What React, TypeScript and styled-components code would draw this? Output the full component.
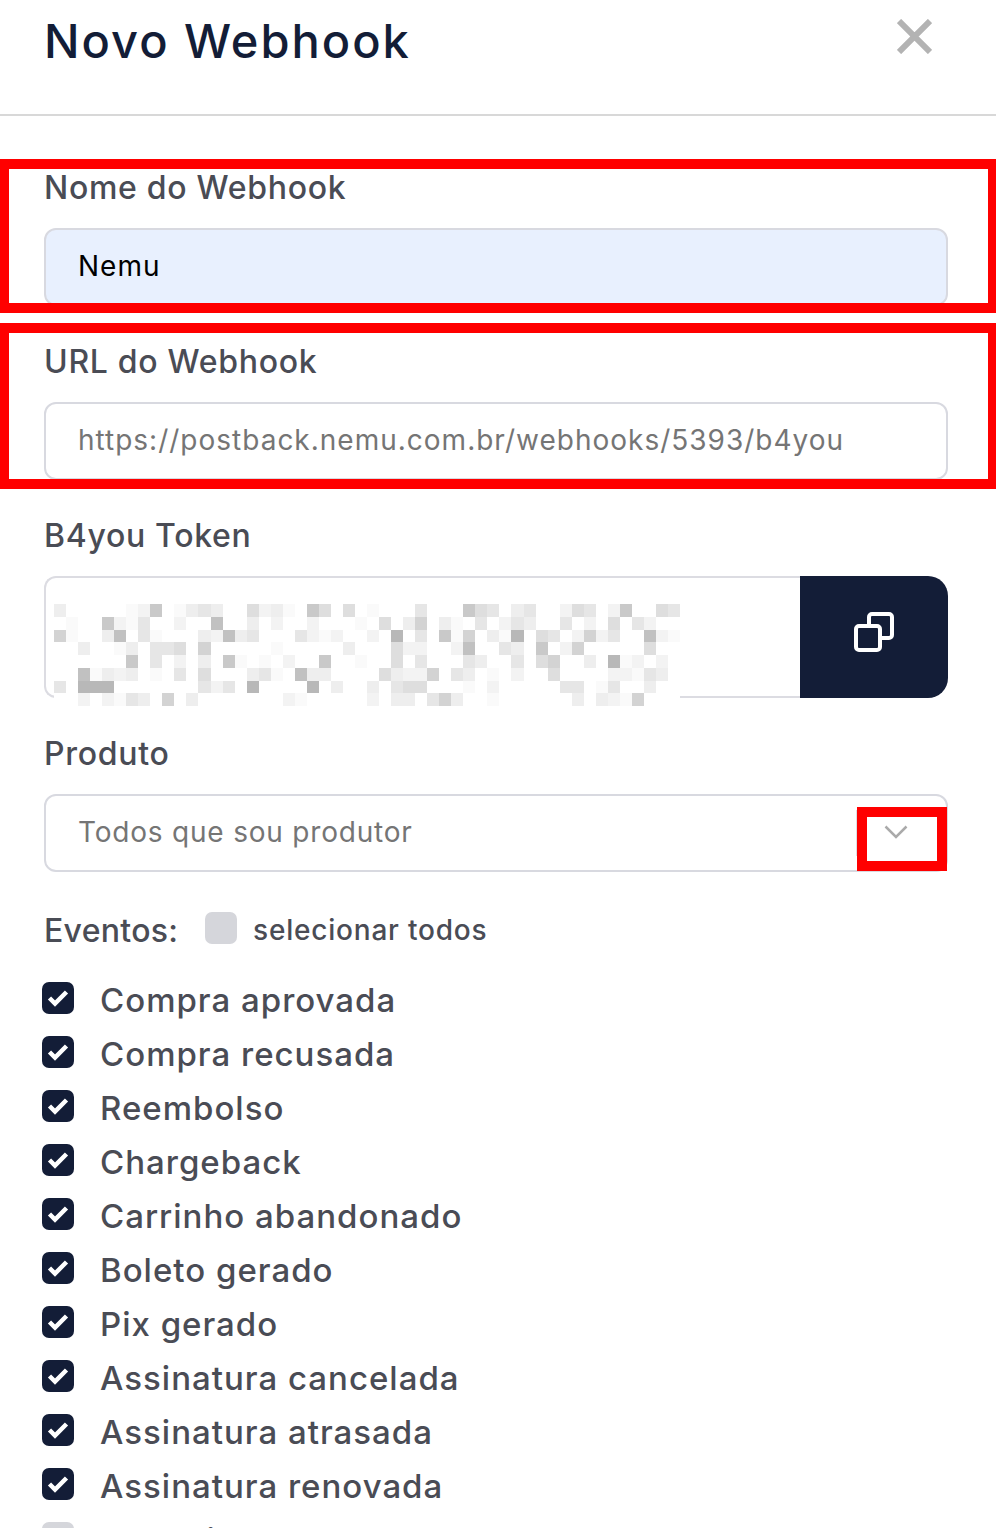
import styled, { createGlobalStyle } from "styled-components";

const GlobalStyle = createGlobalStyle`
	html, body {
		margin: 0;
		padding: 0;
		background: #fff;
	}
	body {
		font-family: "Inter", "Liberation Sans", sans-serif;
	}
	* {
		box-sizing: border-box;
	}
`;

const Page = styled.div`
	position: relative;
	width: 996px;
	height: 1528px;
	overflow: hidden;
	background: #fff;
`;
const Header = styled.header`
	display: flex;
	justify-content: space-between;
	height: 116px;
	padding: 17px 64px 0 44px;
	border-bottom: 2px solid #d8d8d8;
`;
const Title = styled.h1`
	margin: 0;
	font-size: 47px;
	line-height: 48px;
	font-weight: 500;
	letter-spacing: 2px;
	color: #131d37;
`;
const CloseButton = styled.button`
	width: 35px;
	height: 35px;
	margin-top: 2px;
	padding: 0;
	border: 0;
	background: none;
	color: #b3b3b3;
`;
const Form = styled.form`
	display: flex;
	flex-direction: column;
	gap: 32px;
	padding: 48px 48px 0 44px;
`;
const Field = styled.div`
	display: flex;
	flex-direction: column;
	gap: 16px;
`;
const Label = styled.label`
	font-size: 32px;
	line-height: 48px;
	font-weight: 500;
	letter-spacing: 0.7px;
	color: #4a4c55;
`;
const Input = styled.input<{ $filled?: boolean }>`
	width: 100%;
	height: 78px;
	padding: 0 32px 2px;
	border: 2px solid #d8d9e0;
	border-radius: 12px;
	outline: none;
	font: inherit;
	font-size: 28px;
	letter-spacing: 1px;
	color: ${(p) => (p.$filled ? "#000" : "#757575")};
	background: ${(p) => (p.$filled ? "#e8f0fe" : "#fff")};
`;
const TokenRow = styled.div`
	position: relative;
	display: flex;
	height: 122px;
`;
const TokenBox = styled.div`
	flex: 1;
	border: 2px solid #dcdce2;
	border-right: 0;
	border-radius: 12px 0 0 12px;
`;
const CopyButton = styled.button`
	display: flex;
	align-items: center;
	justify-content: center;
	width: 148px;
	padding: 0 0 10px;
	border: 0;
	border-radius: 0 20px 20px 0;
	background: #131d37;
`;
const Mosaic = styled.div`
	position: absolute;
	top: 28px;
	left: 10px;
	width: 626px;
	display: grid;
	grid-template-columns: repeat(52, 1fr);
	grid-auto-rows: 12.75px;
`;
const SelectBox = styled.div`
	position: relative;
	display: flex;
	align-items: center;
	height: 78px;
	padding: 0 32px 2px;
	border: 2px solid #d8d9e0;
	border-radius: 12px;
	font-size: 28px;
	letter-spacing: 0.8px;
	color: #757575;
`;
const ArrowDivider = styled.span`
	position: absolute;
	top: 14px;
	left: 810px;
	width: 1px;
	height: 46px;
	background: #dddde2;
`;
const Chevron = styled.svg`
	position: absolute;
	top: 29px;
	right: 38px;
`;
const EventsHead = styled.div`
	display: flex;
	align-items: center;
	height: 52px;
	color: #4a4c55;
	font-weight: 500;
`;
const EventsTitle = styled.span`
	width: 161px;
	font-size: 32px;
	letter-spacing: 0.3px;
`;
const AllBox = styled.span`
	width: 32px;
	height: 32px;
	margin-right: 16px;
	margin-bottom: 4px;
	border-radius: 7px;
	background: #d5d6db;
`;
const AllText = styled.span`
	font-size: 28px;
	letter-spacing: 0.8px;
`;
const EventList = styled.ul`
	display: flex;
	flex-direction: column;
	margin: 15px 0 0 -2px;
	padding: 0;
	list-style: none;
`;
const EventRow = styled.li`
	display: flex;
	align-items: center;
	gap: 26px;
	height: 54px;
	font-size: 33px;
	font-weight: 500;
	letter-spacing: 1px;
	color: #4a4c55;
`;
const EventName = styled.span`
	padding-top: 3px;
`;
const CheckBox = styled.span<{ $checked: boolean }>`
	display: flex;
	align-items: center;
	justify-content: center;
	flex: none;
	width: 32px;
	height: 32px;
	border-radius: 7px;
	background: ${(p) => (p.$checked ? "#131d37" : "#d5d6db")};
`;
const AnnotationBox = styled.div<{ $top: number; $height: number }>`
	position: absolute;
	top: ${(p) => p.$top}px;
	left: 0;
	right: 0;
	height: ${(p) => p.$height}px;
	border: 10px solid #ff0000;
	border-left-width: 9px;
	border-right-width: 8px;
	pointer-events: none;
`;
const ChevronMark = styled.div`
	position: absolute;
	top: 807px;
	left: 857px;
	width: 90px;
	height: 64px;
	border: 10px solid #ff0000;
	pointer-events: none;
`;

const shades = ["#fff", "#fafafa", "#f3f3f3", "#eee", "#e6e6e6", "#dedede", "#d3d3d3", "#c9c9c9", "#c1c1c1", "#b8b8b8"];
const mosaicRows = [
	"30000012701343005231075050" + "10004000754034002540270054",
	"01007214002008003020020001" + "05036031040243004020504200",
	"61003804100032834000421200" + "20904071603190540262400821",
	"00300130445060000010000030" + "00522002800430702600000500",
	"00000070402030710102007001" + "00504000430040560030912020",
	"00813230104050003410833000" + "05322604301020050000221430",
	"40999000000042409000090300" + "30455000102000004401400300",
	"00202143060300000002100000" + "20330463001000000303216000",
];

const events = [
	"Compra aprovada",
	"Compra recusada",
	"Reembolso",
	"Chargeback",
	"Carrinho abandonado",
	"Boleto gerado",
	"Pix gerado",
	"Assinatura cancelada",
	"Assinatura atrasada",
	"Assinatura renovada",
];

function CheckMark() {
	return (
		<svg width="22" height="18" viewBox="0 0 22 18" fill="none">
			<path d="M2.5 9 L8 14.5 L19.5 3" stroke="#fff" strokeWidth="4.5" />
		</svg>
	);
}

export default function App() {
	return (
		<Page>
			<GlobalStyle />
			<Header>
				<Title>Novo Webhook</Title>
				<CloseButton type="button" aria-label="Fechar">
					<svg width="35" height="35" viewBox="0 0 35 35" fill="none">
						<path d="M2 2 L33 33 M33 2 L2 33" stroke="currentColor" strokeWidth="6" />
					</svg>
				</CloseButton>
			</Header>
			<Form>
				<Field>
					<Label>Nome do Webhook</Label>
					<Input $filled readOnly value="Nemu" />
				</Field>
				<Field>
					<Label>URL do Webhook</Label>
					<Input readOnly value="https://postback.nemu.com.br/webhooks/5393/b4you" />
				</Field>
				<Field>
					<Label>B4you Token</Label>
					<TokenRow>
						<TokenBox />
						<CopyButton type="button" aria-label="Copiar">
							<svg width="40" height="40" viewBox="0 0 40 40" fill="none" stroke="#fff" strokeWidth="4">
								<rect x="2" y="14" width="24" height="24" rx="3" />
								<path d="M15 12 V5 a3 3 0 0 1 3 -3 H35 a3 3 0 0 1 3 3 V23 a3 3 0 0 1 -3 3 H28" />
							</svg>
						</CopyButton>
						<Mosaic>
							{mosaicRows.flatMap((row, r) =>
								row.split("").map((level, c) => (
									<span key={`${r}-${c}`} style={{ background: shades[Number(level)] }} />
								))
							)}
						</Mosaic>
					</TokenRow>
				</Field>
				<Field>
					<Label>Produto</Label>
					<SelectBox>
						Todos que sou produtor
						<ArrowDivider />
						<Chevron width="24" height="15" viewBox="0 0 24 15" fill="none">
							<path d="M1.5 1.5 L12 12 L22.5 1.5" stroke="#aaa" strokeWidth="2.5" />
						</Chevron>
					</SelectBox>
				</Field>
				<div>
					<EventsHead>
						<EventsTitle>Eventos:</EventsTitle>
						<AllBox />
						<AllText>selecionar todos</AllText>
					</EventsHead>
					<EventList>
						{events.map((name) => (
							<EventRow key={name}>
								<CheckBox $checked>
									<CheckMark />
								</CheckBox>
								<EventName>{name}</EventName>
							</EventRow>
						))}
						<EventRow>
							<CheckBox $checked={false} />
							<EventName>Rastreio</EventName>
						</EventRow>
					</EventList>
				</div>
			</Form>
			<AnnotationBox $top={159} $height={154} />
			<AnnotationBox $top={323} $height={166} />
			<ChevronMark />
		</Page>
	);
}
